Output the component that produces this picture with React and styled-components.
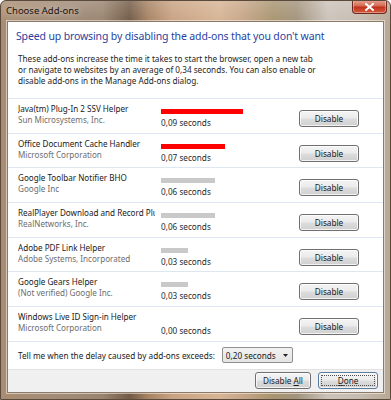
import React from 'react';
import styled, { createGlobalStyle } from 'styled-components';

const GlobalStyle = createGlobalStyle`
  html, body {
    margin: 0;
    padding: 0;
    background: #fff;
  }
  body {
    font-family: "Noto Sans", "Open Sans", sans-serif;
  }
`;

const FONT = `"Noto Sans", "Open Sans", sans-serif`;

const addons = [
  { name: 'Java(tm) Plug-In 2 SSV Helper', publisher: 'Sun Microsystems, Inc.', time: '0,09', bar: 82, slow: true },
  { name: 'Office Document Cache Handler', publisher: 'Microsoft Corporation', time: '0,07', bar: 64, slow: true },
  { name: 'Google Toolbar Notifier BHO', publisher: 'Google Inc', time: '0,06', bar: 54 },
  { name: 'RealPlayer Download and Record Plugin', publisher: 'RealNetworks, Inc.', time: '0,06', bar: 54 },
  { name: 'Adobe PDF Link Helper', publisher: 'Adobe Systems, Incorporated', time: '0,03', bar: 27 },
  { name: 'Google Gears Helper', publisher: '(Not verified) Google Inc.', time: '0,03', bar: 27 },
  { name: 'Windows Live ID Sign-in Helper', publisher: 'Microsoft Corporation', time: '0,00', bar: 0 },
];

const Frame = styled.div`
  width: 391px;
  height: 400px;
  box-sizing: border-box;
  display: flex;
  flex-direction: column;
  border: 1px solid #5a4a3c;
  border-radius: 6px 6px 0 0;
  background:
    linear-gradient(to bottom, rgba(255,255,255,0.18), rgba(255,255,255,0) 22px),
    linear-gradient(to right, #a98d72 0%, #a08a76 18%, #9a8470 26%, #725a46 33%, #a88464 38%,
      #c9a282 44%, #d6b494 56%, #c7a688 62%, #a8946f 70%, #a2937c 76%, #cbc3ba 84%,
      #c6bbb0 92%, #b8a894 100%);
  overflow: hidden;
`;

const TitleBar = styled.div`
  height: 20px;
  display: flex;
  align-items: flex-start;
  justify-content: space-between;
  padding: 0 3px 0 5px;
`;

const Title = styled.span`
  font-family: ${FONT};
  font-size: 9.5px;
  line-height: 20px;
  color: #1c1410;
  text-shadow: 0 0 6px rgba(255,255,255,0.7);
`;

const CloseButton = styled.div`
  width: 33px;
  height: 13px;
  margin-top: -1px;
  border: 1px solid #6a2a22;
  border-top: none;
  border-radius: 0 0 4px 4px;
  background: linear-gradient(to bottom, #e8a898 0%, #d46a52 45%, #c0321c 55%, #d65a3c 100%);
  box-shadow: inset 0 0 0 1px rgba(255,255,255,0.35);
  display: flex;
  align-items: center;
  justify-content: center;
`;

const Client = styled.div`
  flex: 1;
  margin: 0 6px 6px 6px;
  border: 1px solid #8c7a66;
  background: #fff;
  display: flex;
  flex-direction: column;
  box-shadow: 0 0 0 1px rgba(255,255,255,0.5);
`;

const Header = styled.div`
  padding: 6px 10px 0 8px;
`;

const Heading = styled.div`
  font-family: ${FONT};
  font-size: 10.5px;
  letter-spacing: -0.14px;
  line-height: 16px;
  color: #2a3fa0;
  white-space: nowrap;
`;

const Intro = styled.p`
  margin: 9px 0 0 2px;
  font-family: ${FONT};
  font-size: 8.2px;
  line-height: 11px;
  color: #1e1e1e;
  white-space: nowrap;
`;

const List = styled.div`
  margin-top: 12px;
  border-top: 1px solid #dde7f2;
`;

const Row = styled.div`
  height: 33.7px;
  border-bottom: 1px solid #dde7f2;
  display: grid;
  grid-template-columns: 143px 138px 60px;
  padding-left: 10px;
`;

const NameCell = styled.div`
  padding-top: 4px;
  padding-right: 6px;
  overflow: hidden;
  white-space: nowrap;
  font-family: ${FONT};
  font-size: 8.1px;
  line-height: 11px;
`;

const AddonName = styled.div`
  color: #1a1a1a;
  overflow: hidden;
`;

const Publisher = styled.div`
  color: #6e6e6e;
`;

const TimeCell = styled.div`
  padding-top: 10px;
`;

const Bar = styled.div`
  height: 5px;
  background: ${p => (p.$slow ? '#ff0000' : '#c9c9c9')};
`;

const Seconds = styled.div`
  margin-top: 3px;
  font-family: ${FONT};
  font-size: 8.2px;
  line-height: 11px;
  color: #2a2a2a;
`;

const Button = styled.div`
  box-sizing: border-box;
  width: ${p => p.$w || 60}px;
  height: ${p => p.$h || 17}px;
  margin-top: ${p => p.$mt || 0}px;
  border: 1px solid ${p => (p.$default ? '#5a7aa0' : '#707070')};
  border-radius: 3px;
  background: linear-gradient(to bottom, #f4f4f4 0%, #ebebeb 48%, #dddddd 52%, #cfcfcf 100%);
  box-shadow: inset 0 0 0 1px rgba(255,255,255,0.75);
  display: flex;
  align-items: center;
  justify-content: center;
  font-family: ${FONT};
  font-size: 8.2px;
  color: #1a1a1a;
  position: relative;
  white-space: pre;
`;

const Label = styled.span`
  u { text-decoration: underline; }
`;

const Focus = styled.span`
  position: absolute;
  inset: 2px;
  border: 1px dotted #505050;
  border-radius: 1px;
`;

const DelayRow = styled.div`
  height: 27px;
  display: flex;
  align-items: center;
  gap: 7px;
  padding-left: 10px;
`;

const DelayLabel = styled.span`
  font-family: ${FONT};
  font-size: 8.2px;
  color: #1a1a1a;
  white-space: nowrap;
`;

const Select = styled.div`
  box-sizing: border-box;
  width: 71px;
  height: 16px;
  border: 1px solid #8e8f8f;
  border-radius: 2px;
  background: linear-gradient(to bottom, #f2f2f2, #e4e4e4);
  display: flex;
  align-items: center;
  justify-content: space-between;
  padding: 0 4px 0 3px;
  font-family: ${FONT};
  font-size: 8.2px;
  color: #1a1a1a;
`;

const Footer = styled.div`
  flex: 1;
  background: #f0f0f0;
  border-top: 1px solid #e2e2e2;
  display: flex;
  justify-content: flex-end;
  align-items: center;
  gap: 7px;
  padding-right: 5px;
`;

const Arrow = () => (
  <svg width="5" height="3" viewBox="0 0 5 3">
    <path d="M0 0h5L2.5 3z" fill="#222" />
  </svg>
);

const CloseIcon = () => (
  <svg width="9" height="8" viewBox="0 0 9 8">
    <path d="M1 1l7 6M8 1L1 7" stroke="#fff" strokeWidth="2" strokeLinecap="square" />
  </svg>
);

export default function App() {
  return (
    <>
      <GlobalStyle />
      <Frame>
        <TitleBar>
          <Title>Choose Add-ons</Title>
          <CloseButton><CloseIcon /></CloseButton>
        </TitleBar>
        <Client>
          <Header>
            <Heading>Speed up browsing by disabling the add-ons that you don't want</Heading>
            <Intro>
              These add-ons increase the time it takes to start the browser, open a new tab<br />
              or navigate to websites by an average of 0,34 seconds. You can also enable or<br />
              disable add-ons in the Manage Add-ons dialog.
            </Intro>
          </Header>
          <List>
            {addons.map(a => (
              <Row key={a.name}>
                <NameCell>
                  <AddonName>{a.name}</AddonName>
                  <Publisher>{a.publisher}</Publisher>
                </NameCell>
                <TimeCell>
                  {a.bar > 0 ? <Bar $slow={a.slow} style={{ width: a.bar }} /> : <div style={{ height: 5 }} />}
                  <Seconds>{a.time} seconds</Seconds>
                </TimeCell>
                <Button $mt={11}>Disable</Button>
              </Row>
            ))}
          </List>
          <DelayRow>
            <DelayLabel>Tell me when the delay caused by add-ons exceeds:</DelayLabel>
            <Select>
              <span>0,20 seconds</span>
              <Arrow />
            </Select>
          </DelayRow>
          <Footer>
            <Button $w={56} $h={17}>
              <Label>Disable <u>A</u>ll</Label>
            </Button>
            <Button $w={60} $h={17} $default>
              <Focus />
              <Label><u>D</u>one</Label>
            </Button>
          </Footer>
        </Client>
      </Frame>
    </>
  );
}
